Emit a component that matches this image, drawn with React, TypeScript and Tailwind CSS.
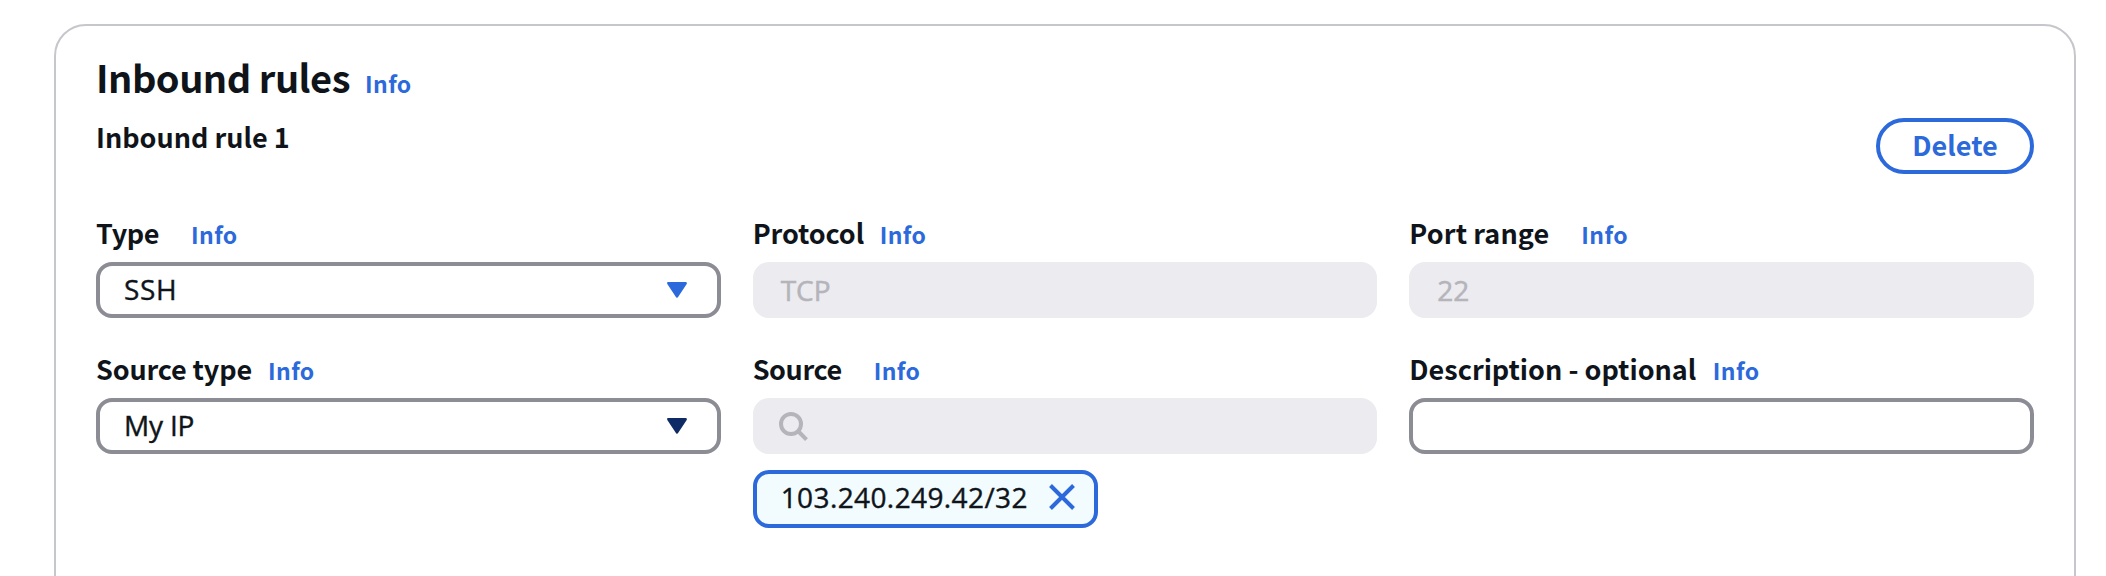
import type { ReactNode } from "react";

function Info() {
  return (
    <a className="text-[23px] leading-9 font-bold tracking-[0.4px] text-[#2c69da]">Info</a>
  );
}

function Field({
  label,
  labelClass,
  children,
}: {
  label: string;
  labelClass: string;
  children: ReactNode;
}) {
  return (
    <div className="flex min-w-0 flex-col">
      <div className="mb-[11px] flex h-9 items-baseline whitespace-nowrap">
        <label className={`shrink-0 text-[27px] leading-9 font-bold ${labelClass}`}>{label}</label>
        <Info />
      </div>
      {children}
    </div>
  );
}

function Select({
  value,
  valueClass,
  caretClass,
}: {
  value: string;
  valueClass: string;
  caretClass: string;
}) {
  return (
    <button className="flex h-14 items-center justify-between rounded-2xl border-4 border-[#8c8c94] pr-6 pl-6 text-left">
      <span
        className={`pb-0.5 font-['Open_Sans',sans-serif] text-[28px] leading-9 [-webkit-text-stroke:0.4px] ${valueClass}`}
      >
        {value}
      </span>
      <svg viewBox="0 0 32 32" className={`size-8 ${caretClass}`}>
        <path
          d="M7.4 9.2h17.2L16 22.4z"
          fill="currentColor"
          stroke="currentColor"
          strokeWidth="2.6"
          strokeLinejoin="round"
        />
      </svg>
    </button>
  );
}

function Disabled({ children }: { children: ReactNode }) {
  return (
    <div className="flex h-14 items-center rounded-2xl bg-[#ebebf0] pl-7 font-['Open_Sans',sans-serif] text-[28px] leading-9 text-[#b4b4ba] [-webkit-text-stroke:0.5px]">
      {children}
    </div>
  );
}

export default function App() {
  return (
    <div className="h-[576px] overflow-hidden bg-white pt-6 pr-[30px] pl-[54px] font-['Noto_Sans_CJK_SC','Open_Sans',sans-serif] text-[#0f141a]">
      <section className="h-[620px] rounded-[32px] border-2 border-[#c6c6cd] px-10 pt-[26px]">
        <header className="flex h-[50px] items-baseline whitespace-nowrap">
          <h2 className="w-[269px] shrink-0 text-[38px] leading-[50px] font-bold tracking-[-0.5px]">
            Inbound rules
          </h2>
          <Info />
        </header>

        <div className="mt-4 flex h-14 items-start justify-between">
          <h3 className="pt-px text-[27px] leading-9 font-bold">Inbound rule 1</h3>
          <button className="flex h-14 w-[158px] items-center justify-center rounded-full border-4 border-[#2c69da] pb-0.5 text-[27px] leading-9 font-bold text-[#2c69da]">
            Delete
          </button>
        </div>

        <div className="mt-[41px] grid grid-cols-3 gap-x-8 gap-y-[33px]">
          <Field label="Type" labelClass="w-[95px] tracking-[-0.4px]">
            <Select value="SSH" valueClass="tracking-[0.7px]" caretClass="text-[#2c69da]" />
          </Field>
          <Field label="Protocol" labelClass="w-[127px] tracking-[-0.1px]">
            <Disabled>TCP</Disabled>
          </Field>
          <Field label="Port range" labelClass="w-[172px] tracking-[0.1px]">
            <Disabled>22</Disabled>
          </Field>
          <Field label="Source type" labelClass="w-[172px] tracking-[-0.15px]">
            <Select value="My IP" valueClass="tracking-[-0.2px]" caretClass="text-[#0f2b66]" />
          </Field>
          <Field label="Source" labelClass="w-[121px] tracking-[-0.4px]">
            <Disabled>
              <svg
                viewBox="0 0 32 32"
                className="-ml-1 size-8"
                fill="none"
                stroke="currentColor"
                strokeWidth="4"
              >
                <circle cx="14" cy="14" r="10" />
                <path d="m21 21 8.5 8.7" />
              </svg>
            </Disabled>
            <div className="mt-4 flex h-[58px] w-[345px] items-center justify-between rounded-2xl border-4 border-[#2c69da] bg-[#f2fcff] pr-4 pb-1 pl-6">
              <span className="font-['Open_Sans',sans-serif] text-[28px] leading-9 tracking-[0.4px] [-webkit-text-stroke:0.4px]">
                103.240.249.42/32
              </span>
              <svg
                viewBox="0 0 32 32"
                className="size-8 text-[#2c69da]"
                fill="none"
                stroke="currentColor"
                strokeWidth="4"
              >
                <path d="M4.5 4.5 27.5 27.5M27.5 4.5 4.5 27.5" />
              </svg>
            </div>
          </Field>
          <Field label="Description - optional" labelClass="w-[303.5px]">
            <input className="h-14 w-full rounded-2xl border-4 border-[#8c8c94] bg-white px-6" />
          </Field>
        </div>
      </section>
    </div>
  );
}
